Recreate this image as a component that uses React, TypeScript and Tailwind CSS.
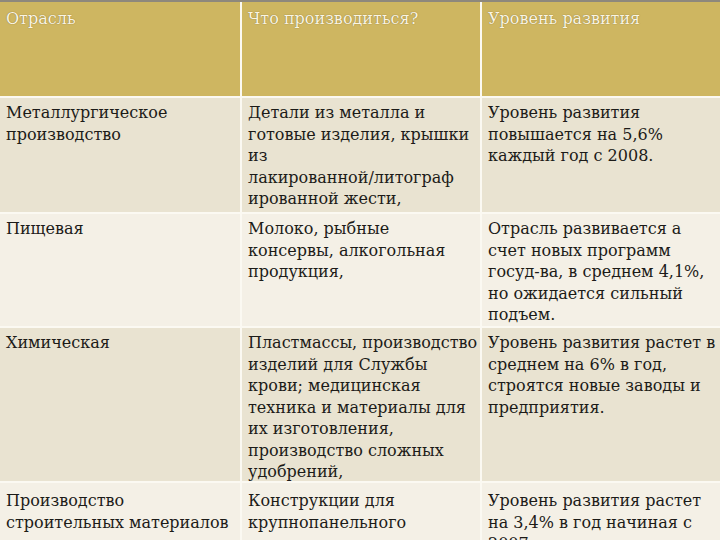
import React from 'react';

type Row = { cells: string[][]; tone: 'dark' | 'light'; pad?: string };

const rows: Row[] = [
  {
    tone: 'dark',
    cells: [
      ['Металлургическое', 'производство'],
      ['Детали из металла и', 'готовые изделия, крышки', 'из', 'лакированной/литограф', 'ированной жести,'],
      ['Уровень развития', 'повышается на 5,6%', 'каждый год с 2008.'],
    ],
  },
  {
    tone: 'light',
    cells: [
      ['Пищевая'],
      ['Молоко, рыбные', 'консервы, алкогольная', 'продукция,'],
      ['Отрасль развивается а', 'счет новых программ', 'госуд-ва, в среднем 4,1%,', 'но ожидается сильный', 'подъем.'],
    ],
  },
  {
    tone: 'dark',
    cells: [
      ['Химическая'],
      ['Пластмассы, производство', 'изделий для Службы', 'крови; медицинская', 'техника и материалы для', 'их изготовления,', 'производство сложных', 'удобрений,'],
      ['Уровень развития растет в', 'среднем на 6% в год,', 'строятся новые заводы и', 'предприятия.'],
    ],
  },
  {
    tone: 'light',
    pad: 'pt-[7px]',
    cells: [
      ['Производство', 'строительных материалов'],
      ['Конструкции для', 'крупнопанельного'],
      ['Уровень развития растет', 'на 3,4% в год начиная с', '2007'],
    ],
  },
];

const headers = ['Отрасль', 'Что производиться?', 'Уровень развития'];

const Cell: React.FC<{ lines: string[]; tone: 'dark' | 'light'; pad?: string }> = ({ lines, tone, pad }) => (
  <div
    className={`${tone === 'dark' ? 'bg-[#e9e3d1]' : 'bg-[#f4f0e6]'} ${pad ?? 'pt-[4px]'} pl-[6px] pr-1 overflow-hidden`}
  >
    {lines.map((l, i) => (
      <div key={i} className="whitespace-nowrap">
        {l}
      </div>
    ))}
  </div>
);

export default function App() {
  return (
    <div
      className="w-[720px] h-[540px] overflow-hidden bg-[#fbf9f2] text-[16px] leading-[21.5px] text-[#1c1b18]"
      style={{ fontFamily: '"DejaVu Serif", "Liberation Serif", serif' }}
    >
      <div className="h-[2px] bg-[#8e887c]" />
      <div className="grid grid-cols-[240px_238px_1fr] grid-rows-[94px_114px_112px_153px_1fr] gap-[2px] h-[538px]">
        {headers.map((h) => (
          <div
            key={h}
            className="bg-[#ceb661] pl-[6px] pt-[6px] text-[#fbf5e2] [text-shadow:0_0_1px_rgba(80,60,15,0.7)]"
          >
            {h}
          </div>
        ))}
        {rows.map((r, ri) =>
          r.cells.map((c, ci) => <Cell key={`${ri}-${ci}`} lines={c} tone={r.tone} pad={r.pad} />)
        )}
      </div>
    </div>
  );
}
